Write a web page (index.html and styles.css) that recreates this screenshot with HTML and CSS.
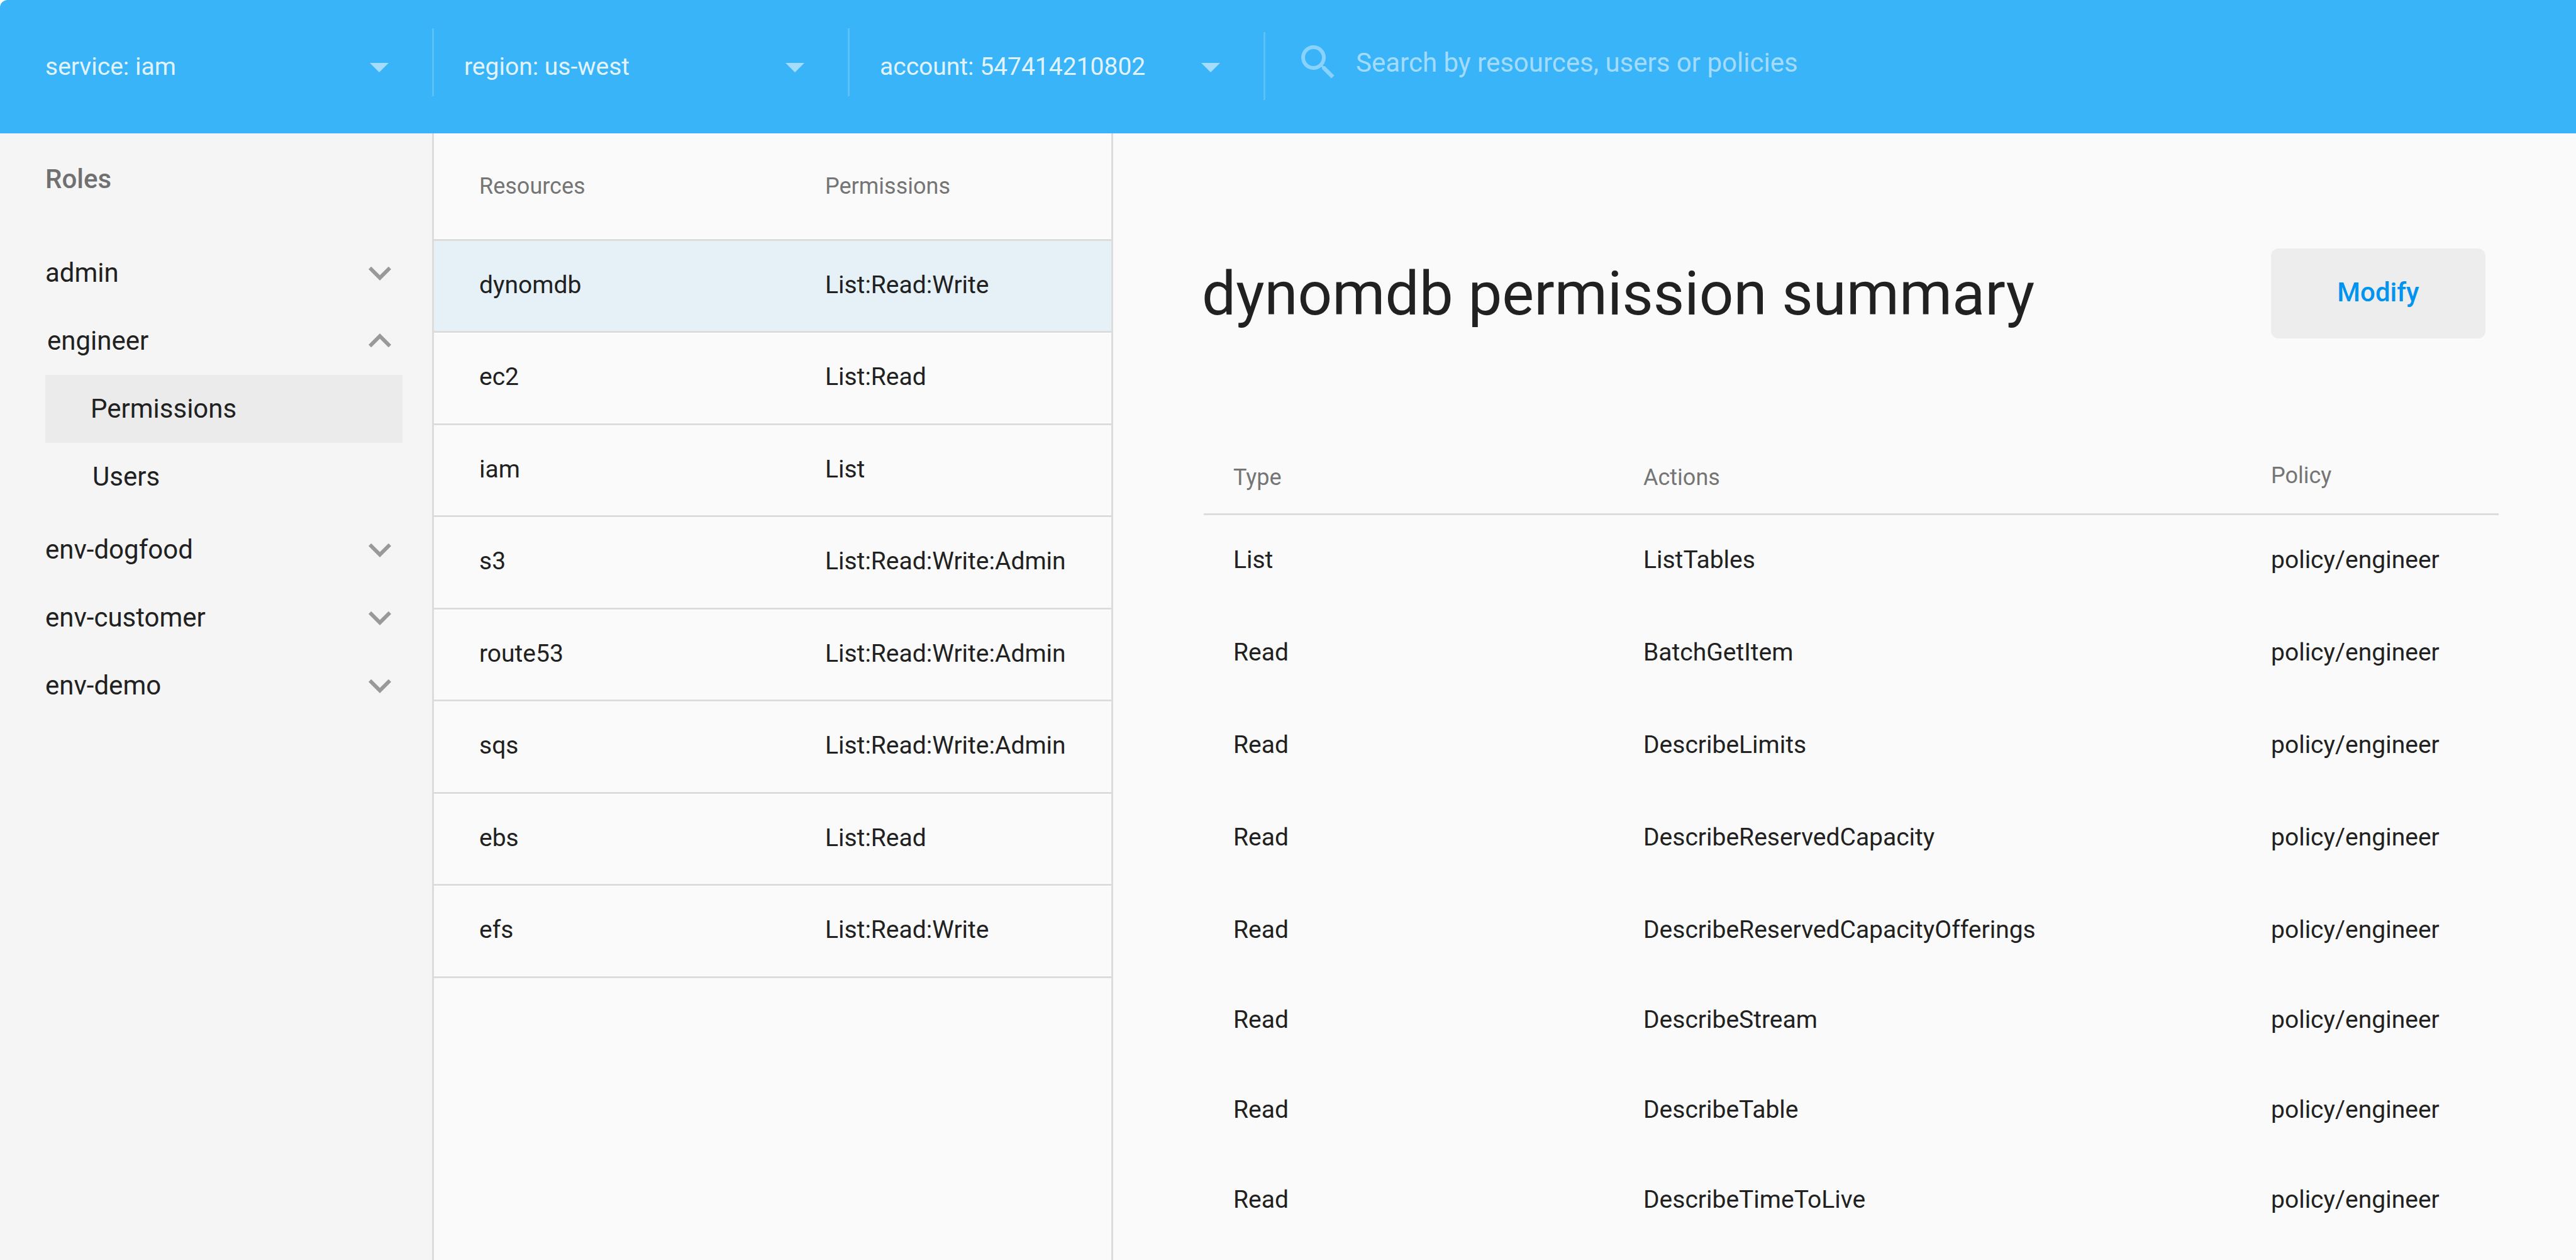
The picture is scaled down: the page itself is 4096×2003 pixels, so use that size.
FILE: index.html
```html
<!DOCTYPE html>
<html lang="en">
<head>
<meta charset="utf-8">
<title>IAM permissions</title>
<link rel="stylesheet" href="styles.css">
</head>
<body>
<svg class="sprite" aria-hidden="true">
  <symbol id="drop" viewBox="0 0 24 24"><path d="M7 10l5 5 5-5z"/></symbol>
  <symbol id="down" viewBox="0 0 24 24"><path d="M16.59 8.59L12 13.17 7.41 8.59 6 10l6 6 6-6z"/></symbol>
  <symbol id="up" viewBox="0 0 24 24"><path d="M12 8l-6 6 1.41 1.41L12 10.83l4.59 4.58L18 14z"/></symbol>
  <symbol id="search" viewBox="0 0 24 24"><path d="M15.5 14h-.79l-.28-.27A6.471 6.471 0 0 0 16 9.5 6.5 6.5 0 1 0 9.5 16c1.61 0 3.09-.59 4.23-1.57l.27.28v.79l5 4.99L20.49 19l-4.99-5zm-6 0C7.01 14 5 11.99 5 9.5S7.01 5 9.5 5 14 7.01 14 9.5 11.99 14 9.5 14z"/></symbol>
</svg>

<header class="topbar">
  <label class="picker picker-first">
    <select class="picker-select" aria-label="Service"><option>service: iam</option></select>
    <svg class="icon"><use href="#drop"/></svg>
  </label>
  <span class="divider"></span>
  <label class="picker">
    <select class="picker-select" aria-label="Region"><option>region: us-west</option></select>
    <svg class="icon"><use href="#drop"/></svg>
  </label>
  <span class="divider"></span>
  <label class="picker">
    <select class="picker-select" aria-label="Account"><option>account: 547414210802</option></select>
    <svg class="icon"><use href="#drop"/></svg>
  </label>
  <span class="divider divider-search"></span>
  <label class="search">
    <svg class="icon search-icon"><use href="#search"/></svg>
    <input class="search-input" type="search" aria-label="Search" placeholder="Search by resources, users or policies">
  </label>
</header>

<div class="layout">
  <nav class="sidebar" aria-labelledby="roles-title">
    <h2 class="sidebar-title" id="roles-title">Roles</h2>
    <ul class="roles">
      <li><button class="role" type="button">admin<svg class="icon"><use href="#down"/></svg></button></li>
      <li>
        <button class="role role-open" type="button" aria-expanded="true">engineer<svg class="icon"><use href="#up"/></svg></button>
        <ul class="role-pages">
          <li><a class="role-page role-page-current" href="#permissions" aria-current="page">Permissions</a></li>
          <li><a class="role-page" href="#users">Users</a></li>
        </ul>
      </li>
      <li><button class="role" type="button">env-dogfood<svg class="icon"><use href="#down"/></svg></button></li>
      <li><button class="role" type="button">env-customer<svg class="icon"><use href="#down"/></svg></button></li>
      <li><button class="role" type="button">env-demo<svg class="icon"><use href="#down"/></svg></button></li>
    </ul>
  </nav>

  <section class="resources" aria-label="Resources">
    <table class="resource-table">
      <thead><tr><th class="resource-name">Resources</th><th>Permissions</th></tr></thead>
      <tbody>
        <tr class="selected"><td>dynomdb</td><td>List:Read:Write</td></tr>
        <tr><td>ec2</td><td>List:Read</td></tr>
        <tr><td>iam</td><td>List</td></tr>
        <tr><td>s3</td><td>List:Read:Write:Admin</td></tr>
        <tr><td>route53</td><td>List:Read:Write:Admin</td></tr>
        <tr><td>sqs</td><td>List:Read:Write:Admin</td></tr>
        <tr><td>ebs</td><td>List:Read</td></tr>
        <tr><td>efs</td><td>List:Read:Write</td></tr>
      </tbody>
    </table>
  </section>

  <main class="summary">
    <div class="summary-head">
      <h1 class="summary-title">dynomdb permission summary</h1>
      <button class="modify" type="button">Modify</button>
    </div>
    <table class="action-table">
      <thead><tr><th class="col-type">Type</th><th>Actions</th><th class="col-policy">Policy</th></tr></thead>
      <tbody>
        <tr><td>List</td><td>ListTables</td><td>policy/engineer</td></tr>
        <tr><td>Read</td><td>BatchGetItem</td><td>policy/engineer</td></tr>
        <tr><td>Read</td><td>DescribeLimits</td><td>policy/engineer</td></tr>
        <tr><td>Read</td><td>DescribeReservedCapacity</td><td>policy/engineer</td></tr>
        <tr><td>Read</td><td>DescribeReservedCapacityOfferings</td><td>policy/engineer</td></tr>
        <tr><td>Read</td><td>DescribeStream</td><td>policy/engineer</td></tr>
        <tr><td>Read</td><td>DescribeTable</td><td>policy/engineer</td></tr>
        <tr><td>Read</td><td>DescribeTimeToLive</td><td>policy/engineer</td></tr>
      </tbody>
    </table>
  </main>
</div>
</body>
</html>
```
FILE: styles.css
```css
*,
*::before,
*::after {
  box-sizing: border-box;
}

body {
  margin: 0;
  min-height: 100vh;
  display: flex;
  flex-direction: column;
  background: #fff;
  color: #212121;
  font-family: Roboto, "Liberation Sans", sans-serif;
  font-size: 39px;
  line-height: 48px;
}

button,
select,
input {
  margin: 0;
  padding: 0;
  border: 0;
  background: none;
  color: inherit;
  font: inherit;
}

ul {
  margin: 0;
  padding: 0;
  list-style: none;
}

table {
  width: 100%;
  border-collapse: separate;
  border-spacing: 0;
  table-layout: fixed;
}

th,
td {
  padding: 0;
  text-align: left;
  vertical-align: top;
}

th {
  color: #757575;
  font-size: 36px;
  font-weight: 400;
  line-height: 42px;
}

.sprite {
  display: none;
}

.icon {
  width: 72px;
  height: 72px;
  flex: none;
  fill: currentColor;
}

/* Top bar */

.topbar {
  display: flex;
  align-items: center;
  height: 212px;
  border-top-left-radius: 12px;
  background: #3ab4f8;
  color: rgba(255, 255, 255, 0.54);
}

.picker {
  display: flex;
  align-items: center;
  width: 658px;
  padding: 0 48px;
}

.picker-first {
  width: 687px;
  padding-left: 72px;
}

.picker-select {
  flex: 1;
  min-width: 0;
  height: 72px;
  appearance: none;
  color: rgba(255, 255, 255, 0.87);
}

.divider {
  align-self: flex-start;
  width: 3px;
  height: 108px;
  margin-top: 45px;
  background: rgba(255, 255, 255, 0.18);
}

.divider-search {
  margin-top: 51px;
}

.search {
  flex: 1;
  align-self: flex-start;
  display: flex;
  align-items: center;
  gap: 24px;
  margin-top: 63px;
  padding: 0 48px;
}

.search-icon {
  color: rgba(255, 255, 255, 0.4);
}

.search-input {
  flex: 1;
  height: 72px;
  font-size: 42px;
  outline: none;
}

.search-input::placeholder {
  color: rgba(255, 255, 255, 0.54);
}

/* Columns below the bar */

.layout {
  flex: 1;
  display: grid;
  grid-template-columns: 690px 1080px 1fr;
}

/* Roles */

.sidebar {
  padding: 49px 47px 48px 72px;
  border-right: 3px solid #dcdcdc;
  background: #f5f5f5;
  font-size: 42px;
}

.sidebar-title {
  margin: 0 0 71px;
  color: #707070;
  font-size: 42px;
  font-weight: 500;
  line-height: 48px;
}

.role {
  display: flex;
  align-items: center;
  justify-content: space-between;
  width: 100%;
  height: 108px;
  text-align: left;
}

.role .icon {
  color: #999;
}

.role-open {
  padding-left: 3px;
}

.role-pages {
  margin-bottom: 8px;
}

.role-page {
  display: flex;
  align-items: center;
  height: 108px;
  padding-left: 75px;
  color: inherit;
  text-decoration: none;
}

.role-page-current {
  padding-left: 72px;
  background: #ebebeb;
}

/* Resources */

.resources {
  border-right: 3px solid #dcdcdc;
  background: #fafafa;
}

.resource-table th,
.resource-table td {
  border-bottom: 3px solid #dcdcdc;
  box-shadow: inset 0 1px #fff, inset 0 -1px #fff;
}

.resource-table .selected td {
  background: #e5f0f7;
  box-shadow: none;
}

.resource-table th {
  height: 171px;
  padding-top: 63px;
}

.resource-table td {
  height: 147px;
  padding-top: 46px;
}

.resource-table tr:nth-child(odd) td {
  height: 146px;
}

.resource-table th:first-child,
.resource-table td:first-child {
  padding-left: 72px;
}

.resource-table .resource-name {
  width: 622px;
}

/* Permission summary */

.summary {
  padding: 183px 123px 0 141px;
  background: #fafafa;
}

.summary-head {
  display: flex;
  align-items: center;
  justify-content: space-between;
  padding-right: 21px;
}

.summary-title {
  margin: 0;
  font-size: 96px;
  font-weight: 400;
  line-height: 112px;
}

.modify {
  width: 341px;
  height: 143px;
  padding-bottom: 4px;
  border-radius: 12px;
  background: #ededed;
  color: #0094ef;
  font-size: 42px;
  font-weight: 500;
}

.action-table {
  width: calc(100% - 3px);
  margin: 197px 0 0 3px;
}

.action-table th {
  padding-bottom: 36px;
  border-bottom: 3px solid #dcdcdc;
  vertical-align: bottom;
}

.action-table .col-type {
  width: 699px;
}

.action-table .col-policy {
  width: 362px;
  padding-bottom: 39px;
}

.action-table th:first-child,
.action-table td:first-child {
  padding-left: 47px;
}

.action-table td {
  height: 147px;
  padding-top: 47px;
}

.action-table tr:nth-child(n + 5) td {
  height: 143px;
}
```
